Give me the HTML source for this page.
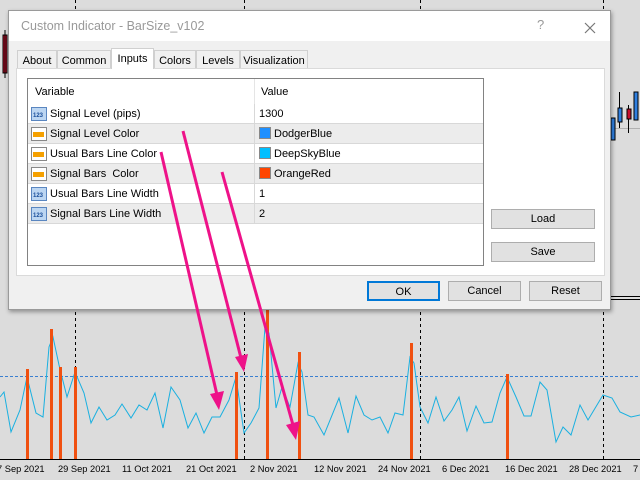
<!DOCTYPE html>
<html><head><meta charset="utf-8"><style>
*{margin:0;padding:0;box-sizing:border-box}
body{width:640px;height:480px;overflow:hidden;background:#dcdcdc;font-family:"Liberation Sans",sans-serif;font-size:11px;color:#000;position:relative}
.abs{position:absolute}
#dlg{left:8px;top:10px;width:603px;height:300px;background:#f0f0f0;border:1px solid #9a9a9a;box-shadow:1px 2px 4px rgba(0,0,0,.35)}
#title{left:0;top:0;width:601px;height:30px;background:#fff;color:#999;font-size:12.5px;padding:8px 0 0 12px}
.tab{top:39px;height:19px;border:1px solid #d0d0d0;border-bottom:none;background:#f0f0f0;font-size:11px;text-align:center;padding-top:4px}
#panel{left:7px;top:57px;width:589px;height:208px;background:#fff;border:1px solid #dadada}
#tbl{left:18px;top:67px;width:457px;height:188px;border:1px solid #828282;background:#fff}
.row{position:absolute;left:0;width:455px;height:20px;border-bottom:1px solid #d8d8d8}
.row span{position:absolute;top:4px}
.btn{height:20px;border:1px solid #adadad;background:#e1e1e1;text-align:center;padding-top:3px;font-size:11px}
.sw{width:12px;height:12px;border:1px solid #888;display:inline-block;vertical-align:-2px;margin-right:3px}
</style></head><body>
<svg class="abs" style="left:0;top:0" width="640" height="480">
<g stroke="#000" stroke-dasharray="3,3" stroke-width="1">
<line x1="75.5" y1="0" x2="75.5" y2="459"/><line x1="244.5" y1="0" x2="244.5" y2="459"/><line x1="420.5" y1="0" x2="420.5" y2="459"/><line x1="603.5" y1="0" x2="603.5" y2="459"/>
</g>
<line x1="0" y1="376.5" x2="640" y2="376.5" stroke="#3a7fd0" stroke-dasharray="3,2"/>
<line x1="611" y1="128.5" x2="640" y2="128.5" stroke="#b0b0b0"/>
<line x1="611" y1="296.5" x2="640" y2="296.5" stroke="#000"/><line x1="611" y1="299.5" x2="640" y2="299.5" stroke="#000"/>
<rect x="3" y="35" width="4" height="38" fill="#c8102e" stroke="#000"/><line x1="5" y1="30" x2="5" y2="78" stroke="#000"/>
<line x1="619.5" y1="92" x2="619.5" y2="128" stroke="#000"/><rect x="618" y="108" width="4" height="14" fill="#2f7fe0" stroke="#000"/>
<line x1="628.5" y1="105" x2="628.5" y2="133" stroke="#000"/><rect x="627" y="109" width="4" height="10" fill="#c8102e" stroke="#000"/>
<rect x="634" y="92" width="4" height="28" fill="#2f7fe0" stroke="#000"/>
<rect x="611" y="118" width="4" height="22" fill="#2f7fe0" stroke="#000"/>
<polyline fill="none" stroke="#1ab0e0" stroke-width="1" points="0,397 4,392 11,432 20,410 27,377 36,413 43,417 49,347 53,337 59,365 67,397 75,372 84,393 91,423 99,407 107,420 115,415 122,404 131,418 139,405 147,410 155,393 163,428 171,387 180,400 188,428 196,413 204,433 212,417 220,417 229,400 236,377 244,433 251,423 259,408 265,327 269,333 276,408 282,387 290,407 298,363 302,372 308,415 314,417 324,435 339,398 348,433 356,396 364,415 372,420 380,417 388,433 395,413 403,415 410,357 414,363 420,407 428,423 436,397 444,421 452,410 459,397 467,431 476,406 484,423 492,422 500,393 507,377 516,397 524,416 531,416 540,382 547,390 556,442 563,427 571,435 580,405 588,420 603,395 612,398 620,412 631,417 640,415"/>
<g fill="#f05010">
<rect x="26" y="369" width="3" height="90"/><rect x="50" y="329" width="3" height="130"/><rect x="59" y="367" width="3" height="92"/><rect x="74" y="367" width="3" height="92"/><rect x="235" y="372" width="3" height="87"/><rect x="266" y="310" width="3" height="149"/><rect x="298" y="352" width="3" height="107"/><rect x="410" y="343" width="3" height="116"/><rect x="506" y="374" width="3" height="85"/>
</g>
<line x1="0" y1="459.5" x2="640" y2="459.5" stroke="#000"/>
<g font-family="Liberation Sans" font-size="9.3" fill="#000">
<text x="-3" y="472">7 Sep 2021</text><text x="58" y="472">29 Sep 2021</text><text x="122" y="472">11 Oct 2021</text><text x="186" y="472">21 Oct 2021</text><text x="250" y="472">2 Nov 2021</text><text x="314" y="472">12 Nov 2021</text><text x="378" y="472">24 Nov 2021</text><text x="442" y="472">6 Dec 2021</text><text x="505" y="472">16 Dec 2021</text><text x="569" y="472">28 Dec 2021</text><text x="633" y="472">7</text>
</g>
</svg>
<div id="dlg" class="abs">
<div id="title" class="abs">Custom Indicator - BarSize_v102<span class="abs" style="left:528px;top:6px;color:#999;font-size:13px">?</span>
<svg class="abs" style="left:575px;top:11px" width="12" height="12"><path d="M1 1L11 11M11 1L1 11" stroke="#777" stroke-width="1.2"/></svg></div>
<div class="tab abs" style="left:8px;width:40px">About</div>
<div class="tab abs" style="left:48px;width:54px">Common</div>
<div class="tab abs" style="left:102px;width:43px;top:37px;height:21px;background:#fff;z-index:2">Inputs</div>
<div class="tab abs" style="left:145px;width:42px">Colors</div>
<div class="tab abs" style="left:187px;width:44px">Levels</div>
<div class="tab abs" style="left:231px;width:68px">Visualization</div>
<div id="panel" class="abs"></div>
<div id="tbl" class="abs">
<div class="row" style="top:0;height:25px;border:none"><span style="left:7px;top:7px">Variable</span><span style="left:233px;top:7px">Value</span></div>
<div class="abs" style="left:226px;top:0;width:1px;height:25px;background:#e5e5e5"></div>
<div class="row" style="top:25px"><span style="left:22px">Signal Level (pips)</span><span style="left:231px">1300</span></div>
<div class="row" style="top:45px;background:#ececec"><span style="left:22px">Signal Level Color</span><span style="left:231px;top:3px"><i class="sw" style="background:#1e90ff"></i>DodgerBlue</span></div>
<div class="row" style="top:65px"><span style="left:22px">Usual Bars Line Color</span><span style="left:231px;top:3px"><i class="sw" style="background:#00bfff"></i>DeepSkyBlue</span></div>
<div class="row" style="top:85px;background:#ececec"><span style="left:22px">Signal Bars &nbsp;Color</span><span style="left:231px;top:3px"><i class="sw" style="background:#ff4500"></i>OrangeRed</span></div>
<div class="row" style="top:105px"><span style="left:22px">Usual Bars Line Width</span><span style="left:231px">1</span></div>
<div class="row" style="top:125px;background:#ececec"><span style="left:22px">Signal Bars Line Width</span><span style="left:231px">2</span></div>
<div class="abs" style="left:226px;top:25px;width:1px;height:120px;background:#d8d8d8"></div>
<svg class="abs" style="left:2px;top:25px" width="18" height="120">
<g font-size="6" font-family="Liberation Sans" font-weight="bold" fill="#1a4e9a">
<rect x="1.5" y="3.5" width="15" height="13" fill="#bcd6f2" stroke="#5a86c0"/><text x="3" y="13">123</text>
<rect x="1.5" y="83.5" width="15" height="13" fill="#bcd6f2" stroke="#5a86c0"/><text x="3" y="93">123</text>
<rect x="1.5" y="103.5" width="15" height="13" fill="#bcd6f2" stroke="#5a86c0"/><text x="3" y="113">123</text>
</g>
<g>
<rect x="1.5" y="23.5" width="15" height="13" fill="#fff" stroke="#888"/><rect x="3" y="28" width="11" height="5" fill="#f5a000"/>
<rect x="1.5" y="43.5" width="15" height="13" fill="#fff" stroke="#888"/><rect x="3" y="48" width="11" height="5" fill="#f5a000"/>
<rect x="1.5" y="63.5" width="15" height="13" fill="#fff" stroke="#888"/><rect x="3" y="68" width="11" height="5" fill="#f5a000"/>
</g>
</svg>
</div>
<div class="btn abs" style="left:482px;top:198px;width:104px">Load</div>
<div class="btn abs" style="left:482px;top:231px;width:104px">Save</div>
<div class="btn abs" style="left:358px;top:270px;width:73px;border:2px solid #0078d7">OK</div>
<div class="btn abs" style="left:439px;top:270px;width:73px">Cancel</div>
<div class="btn abs" style="left:520px;top:270px;width:73px">Reset</div>
</div>
<svg class="abs" style="left:0;top:0" width="640" height="480">
<g stroke="#ee1289" stroke-width="3" fill="#ee1289">
<line x1="183" y1="131" x2="241" y2="358"/><polygon points="235,357 248,354 244,372" stroke="none"/>
<line x1="161" y1="152" x2="217" y2="395"/><polygon points="210,394 224,391 219,410" stroke="none"/>
<line x1="222" y1="172" x2="293" y2="425"/><polygon points="286,425 300,421 296,440" stroke="none"/>
</g>
</svg>
</body></html>
